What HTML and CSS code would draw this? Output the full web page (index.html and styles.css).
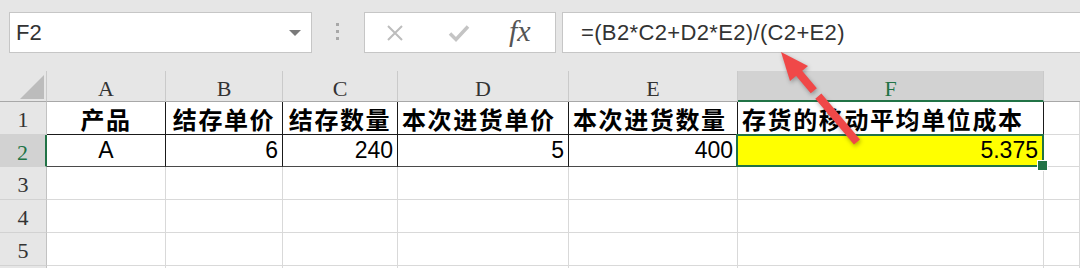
FILE: index.html
```html
<!DOCTYPE html>
<html lang="zh-CN">
<head>
<meta charset="utf-8">
<title>Excel</title>
<link rel="stylesheet" href="styles.css">
</head>
<body>
<div class="app">
  <div class="toolbar">
    <div class="namebox"><span class="name">F2</span><span class="caret"></span></div>
    <div class="grip"><i></i><i></i><i></i></div>
    <div class="actions">
      <svg class="ic-x" width="18" height="18" viewBox="0 0 18 18"><path d="M2 2L16 16M16 2L2 16" stroke="#bdbdbd" stroke-width="2" fill="none"/></svg>
      <svg class="ic-ok" width="22" height="20" viewBox="0 0 22 20"><path d="M2 10.5L8 16.5L20 3.5" stroke="#c4c4c4" stroke-width="3.5" fill="none"/></svg>
      <span class="fx">fx</span>
    </div>
    <div class="formula">=(B2*C2+D2*E2)/(C2+E2)</div>
  </div>
  <div class="sheet">
    <div class="corner"><svg width="47" height="31" viewBox="0 0 47 31"><polygon points="20,28 44,28 44,4" fill="#bcbcbc"/></svg></div>
    <div class="ch">A</div><div class="ch">B</div><div class="ch">C</div><div class="ch">D</div><div class="ch">E</div><div class="ch sel">F</div><div class="ch last"></div>

    <div class="rh">1</div>
    <div class="d t1 ctr">产品</div>
    <div class="d t1 ctr">结存单价</div>
    <div class="d t1 ctr">结存数量</div>
    <div class="d t1 lft">本次进货单价</div>
    <div class="d t1 lft">本次进货数量</div>
    <div class="d t1 lft">存货的移动平均单位成本</div>
    <div class="e"></div>

    <div class="rh sel">2</div>
    <div class="d t2 mid">A</div>
    <div class="d t2 num">6</div>
    <div class="d t2 num">240</div>
    <div class="d t2 num">5</div>
    <div class="d t2 num">400</div>
    <div class="d t2 num f2">5.375</div>
    <div class="e"></div>

    <div class="rh">3</div><div class="e"></div><div class="e"></div><div class="e"></div><div class="e"></div><div class="e"></div><div class="e"></div><div class="e"></div>
    <div class="rh">4</div><div class="e"></div><div class="e"></div><div class="e"></div><div class="e"></div><div class="e"></div><div class="e"></div><div class="e"></div>
    <div class="rh">5</div><div class="e"></div><div class="e"></div><div class="e"></div><div class="e"></div><div class="e"></div><div class="e"></div><div class="e"></div>
    <div class="rh"></div><div class="e"></div><div class="e"></div><div class="e"></div><div class="e"></div><div class="e"></div><div class="e"></div><div class="e"></div>
  </div>
  <svg class="arrow" width="1080" height="268" viewBox="0 0 1080 268">
    <line x1="857" y1="142" x2="798" y2="72" stroke="#f04848" stroke-width="8" stroke-dasharray="60 7 40"/>
    <polygon points="781,52 808,66 790,81" fill="#f04848"/>
  </svg>
</div>
</body>
</html>
```

FILE: styles.css
```css
* { box-sizing: border-box; margin: 0; padding: 0; }

body {
  width: 1080px;
  height: 268px;
  overflow: hidden;
  background: #e6e6e6;
  font-family: "Liberation Sans", Arial, sans-serif;
}

.app {
  position: relative;
  width: 1080px;
  height: 268px;
}

/* ---------- formula bar ---------- */
.toolbar {
  height: 71px;
  display: flex;
  align-items: flex-start;
  padding-top: 12px;
}

.namebox {
  margin-left: 9px;
  width: 303px;
  height: 41px;
  border: 1px solid #c6c6c6;
  background: #fff;
  display: flex;
  align-items: center;
  justify-content: space-between;
  padding: 0 10px 0 6px;
}

.name {
  font-size: 22px;
  color: #333;
}

.caret {
  width: 0;
  height: 0;
  border-left: 6px solid transparent;
  border-right: 6px solid transparent;
  border-top: 6px solid #7a7a7a;
}

.grip {
  margin-left: 24px;
  margin-top: 11px;
  display: flex;
  flex-direction: column;
  gap: 4px;
}

.grip i {
  display: block;
  width: 3px;
  height: 3px;
  background: #a8a8a8;
}

.actions {
  margin-left: 25px;
  width: 192px;
  height: 41px;
  border: 1px solid #c6c6c6;
  background: #fff;
  display: flex;
  align-items: center;
  padding-left: 21px;
}

.ic-ok { margin-left: 44px; }

.fx {
  margin-left: 39px;
  font-family: "Liberation Serif", "Times New Roman", serif;
  font-style: italic;
  font-size: 30px;
  color: #555;
  line-height: 1;
  margin-top: -3px;
}

.formula {
  margin-left: 6px;
  flex: 1;
  height: 41px;
  border: 1px solid #c6c6c6;
  border-right: none;
  background: #fff;
  padding-left: 18px;
  font-size: 22px;
  letter-spacing: 0.35px;
  line-height: 39px;
  color: #333;
  white-space: nowrap;
}

/* ---------- sheet grid ---------- */
.sheet {
  display: grid;
  grid-template-columns: 47px 119px 117px 115px 171px 169px 306px 1fr;
  grid-template-rows: 31px 33px 32px 33px 33px 33px 10px;
  background: #fff;
}

.corner {
  background: #e6e6e6;
  border-right: 1px solid #cacaca;
  border-bottom: 1px solid #a8a8a8;
}

.corner svg { display: block; }

.ch {
  background: #e6e6e6;
  border-right: 1px solid #cacaca;
  border-bottom: 1px solid #a8a8a8;
  font-family: "Liberation Serif", "Times New Roman", serif;
  font-size: 22px;
  color: #333;
  text-align: center;
  line-height: 27px;
  padding-top: 4px;
}

.ch.sel {
  background: #d2d2d2;
  color: #217346;
  border-bottom: 2px solid #217346;
}

.ch.last { border-right: none; }

.rh {
  background: #e6e6e6;
  border-right: 1px solid #c2c2c2;
  border-bottom: 1px solid #d2d2d2;
  font-family: "Liberation Serif", "Times New Roman", serif;
  font-size: 22px;
  color: #333;
  text-align: center;
  line-height: 32px;
  padding-top: 2px;
}

.rh.sel {
  background: #d2d2d2;
  color: #217346;
  border-right: 2px solid #217346;
}

.d {
  background: #fff;
  border-right: 1px solid #1a1a1a;
  border-bottom: 1px solid #1a1a1a;
  display: flex;
  align-items: center;
  padding: 0 4px;
  color: #000;
  white-space: nowrap;
}

.t1 {
  font-family: "Noto Sans CJK SC", sans-serif;
  font-weight: 700;
  font-size: 24px;
  letter-spacing: 1.6px;
}

.t2 {
  border-bottom-color: #4a4a4a;
  font-family: "Liberation Sans", Arial, sans-serif;
  font-size: 23px;
}

.ctr { justify-content: center; }
.lft { justify-content: flex-start; }
.mid { justify-content: center; }
.num { justify-content: flex-end; }

.f2 {
  position: relative;
  background: #ffff00;
  padding-right: 5px;
}

.f2::after {
  content: "";
  position: absolute;
  left: -2px;
  top: -1px;
  right: -1px;
  bottom: -1px;
  border: 2px solid #217346;
}

.f2::before {
  content: "";
  position: absolute;
  right: -5px;
  bottom: -5px;
  width: 9px;
  height: 9px;
  background: #217346;
  border: 1px solid #fff;
  z-index: 2;
}

.e {
  background: #fff;
  border-right: 1px solid #d9d9d9;
  border-bottom: 1px solid #d9d9d9;
}

/* ---------- annotation ---------- */
.arrow {
  position: absolute;
  left: 0;
  top: 0;
  pointer-events: none;
  filter: drop-shadow(1px 2px 2px rgba(0, 0, 0, 0.3));
}
```
